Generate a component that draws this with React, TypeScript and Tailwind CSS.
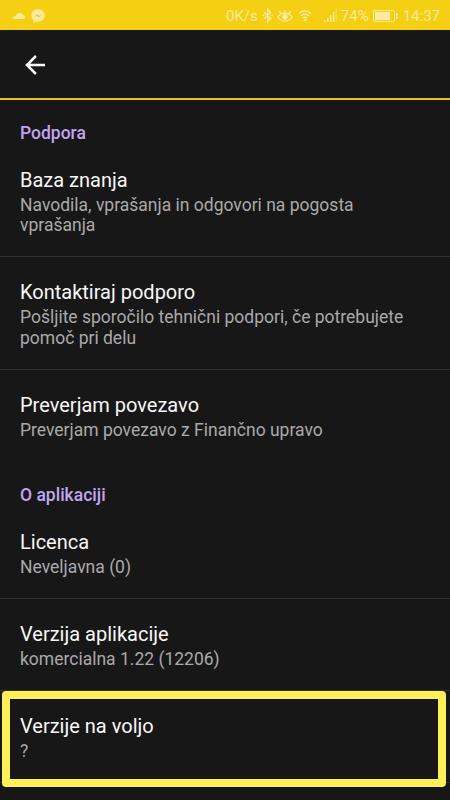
type Item = { title: string; lines: string[]; divider?: boolean; highlighted?: boolean };

const support: Item[] = [
  { title: "Baza znanja", lines: ["Navodila, vprašanja in odgovori na pogosta", "vprašanja"], divider: true },
  { title: "Kontaktiraj podporo", lines: ["Pošljite sporočilo tehnični podpori, če potrebujete", "pomoč pri delu"], divider: true },
  { title: "Preverjam povezavo", lines: ["Preverjam povezavo z Finančno upravo"] },
];

const about: Item[] = [
  { title: "Licenca", lines: ["Neveljavna (0)"], divider: true },
  { title: "Verzija aplikacije", lines: ["komercialna 1.22 (12206)"], divider: true },
  { title: "Verzije na voljo", lines: ["?"], divider: true, highlighted: true },
];

function Row({ title, lines, divider, highlighted }: Item) {
  return (
    <div className={`relative border-b px-5 pt-[22.9px] pb-[20.6px] ${divider ? "border-[#323232]" : "border-transparent"}`}>
      <div className="text-[20px] leading-[24px] text-[#f8f8f8]">{title}</div>
      <div className="pt-[3px] text-[17.5px] leading-[20.5px] text-[#aaaaaa]">
        {lines.map((line) => (
          <div key={line} className="whitespace-nowrap">{line}</div>
        ))}
      </div>
      {highlighted && (
        <div className="absolute top-[0.5px] right-[4px] left-[2px] h-[96px] rounded-[4px] border-8 border-[#fff05a]" />
      )}
    </div>
  );
}

function Heading({ children }: { children: string }) {
  return (
    <h2 className="h-[45px] px-5 pt-[23px] text-[17.5px] leading-[21px] font-medium text-[#c0a6f3]">{children}</h2>
  );
}

function StatusBar() {
  return (
    <header className="flex h-[30px] items-center bg-[#f5cf13] pt-px text-[#fceb9c]">
      <svg className="ml-3 h-[8px] w-[14px]" viewBox="0 0 14 8" fill="currentColor">
        <path d="M5 7V2.200C6.200.5 9.800.6 10.800 3.200c1.500-.2 2.700.7 2.700 1.900 0 1-.7 1.900-1.800 1.900z" />
        <path d="M1 5v1.500M2.300 4v3M3.600 4v3M4.700 2.800V7" stroke="currentColor" strokeWidth="1.200" />
      </svg>
      <svg className="ml-[5px] h-[14px] w-[14px]" viewBox="0 0 14 14">
        <path d="M7 .3C3.200.3.3 3 .3 6.700c0 2 .9 3.700 2.200 4.800v2.200l2.100-1.200c.7.2 1.500.3 2.400.3 3.800 0 6.700-2.600 6.700-6.200S10.800.3 7 .3z" fill="currentColor" />
        <path d="M3 8.600 6.100 5.300l2 1.700L11 5.200 7.900 8.500l-2-1.700z" fill="#e8bd17" />
      </svg>
      <span className="ml-auto text-[15px] leading-5">0K/s</span>
      <svg className="ml-[4px] h-[15px] w-[12px]" viewBox="0 0 11 14" fill="none" stroke="currentColor" strokeWidth="1.400">
        <path d="m2 4 6 6-2.700 2.700V1.300L8 4l-6 6M.5 7h1.500M8.700 7h1.500" />
      </svg>
      <svg className="ml-[3px] h-[14px] w-[16px]" viewBox="0 0 16 14" fill="none" stroke="currentColor" strokeWidth="1.400">
        <path d="M1 8c3-5 11-5 14 0-3 5.500-11 5.500-14 0zM8 4V1M4 4.500 2.300 2M12 4.500l1.700-2.500" />
        <circle cx="8" cy="8" r="2" fill="currentColor" />
      </svg>
      <svg className="ml-[5px] h-[13px] w-[14px]" viewBox="0 0 14 13" fill="none" stroke="currentColor" strokeWidth="1.500">
        <path d="M.8 4.600c3.500-3.500 8.900-3.500 12.400 0M2.900 7c2.300-2.200 5.900-2.200 8.200 0M4.900 9.200c1.200-1.100 3-1.100 4.200 0" />
        <circle cx="7" cy="11.200" r="1.200" fill="currentColor" stroke="none" />
      </svg>
      <svg className="ml-[12px] h-[13px] w-[13px]" viewBox="0 0 13 13" fill="currentColor">
        <path d="M0 11h1.500v2H0zM3 9h1.500v4H3zM6 6h1.500v7H6zM9 3h1.500v10H9z" />
        <path d="M11.700 0h1.300v13h-1.300z" opacity=".4" />
      </svg>
      <span className="ml-[4px] text-[15px] leading-5">74%</span>
      <svg className="ml-[4px] h-[12px] w-[25px]" viewBox="0 0 25 12" fill="none" stroke="currentColor">
        <rect x=".5" y=".5" width="21" height="11" rx="1.500" />
        <path d="M2 2h15v8H2z" fill="currentColor" stroke="none" />
        <path d="M23.700 3v6" strokeWidth="1.500" />
      </svg>
      <span className="mr-[10px] ml-[5px] text-[15px] leading-5">14:37</span>
    </header>
  );
}

export default function App() {
  return (
    <div className="flex h-[800px] w-[450px] flex-col overflow-hidden bg-[#171717] font-['Roboto','Noto_Sans',sans-serif]">
      <StatusBar />
      <nav className="flex h-[70px] shrink-0 items-center border-b-2 border-[#e9c01b] pl-[25px]">
        <button aria-label="Nazaj" className="mt-px">
          <svg className="h-5 w-5" viewBox="0 0 20 20" fill="none" stroke="#fff" strokeWidth="2.500">
            <path d="M20 10H2M10.900 1 1.900 10l9 9" />
          </svg>
        </button>
      </nav>
      <main>
        <Heading>Podpora</Heading>
        {support.map((item) => <Row key={item.title} {...item} />)}
        <Heading>O aplikaciji</Heading>
        {about.map((item) => <Row key={item.title} {...item} />)}
      </main>
    </div>
  );
}
